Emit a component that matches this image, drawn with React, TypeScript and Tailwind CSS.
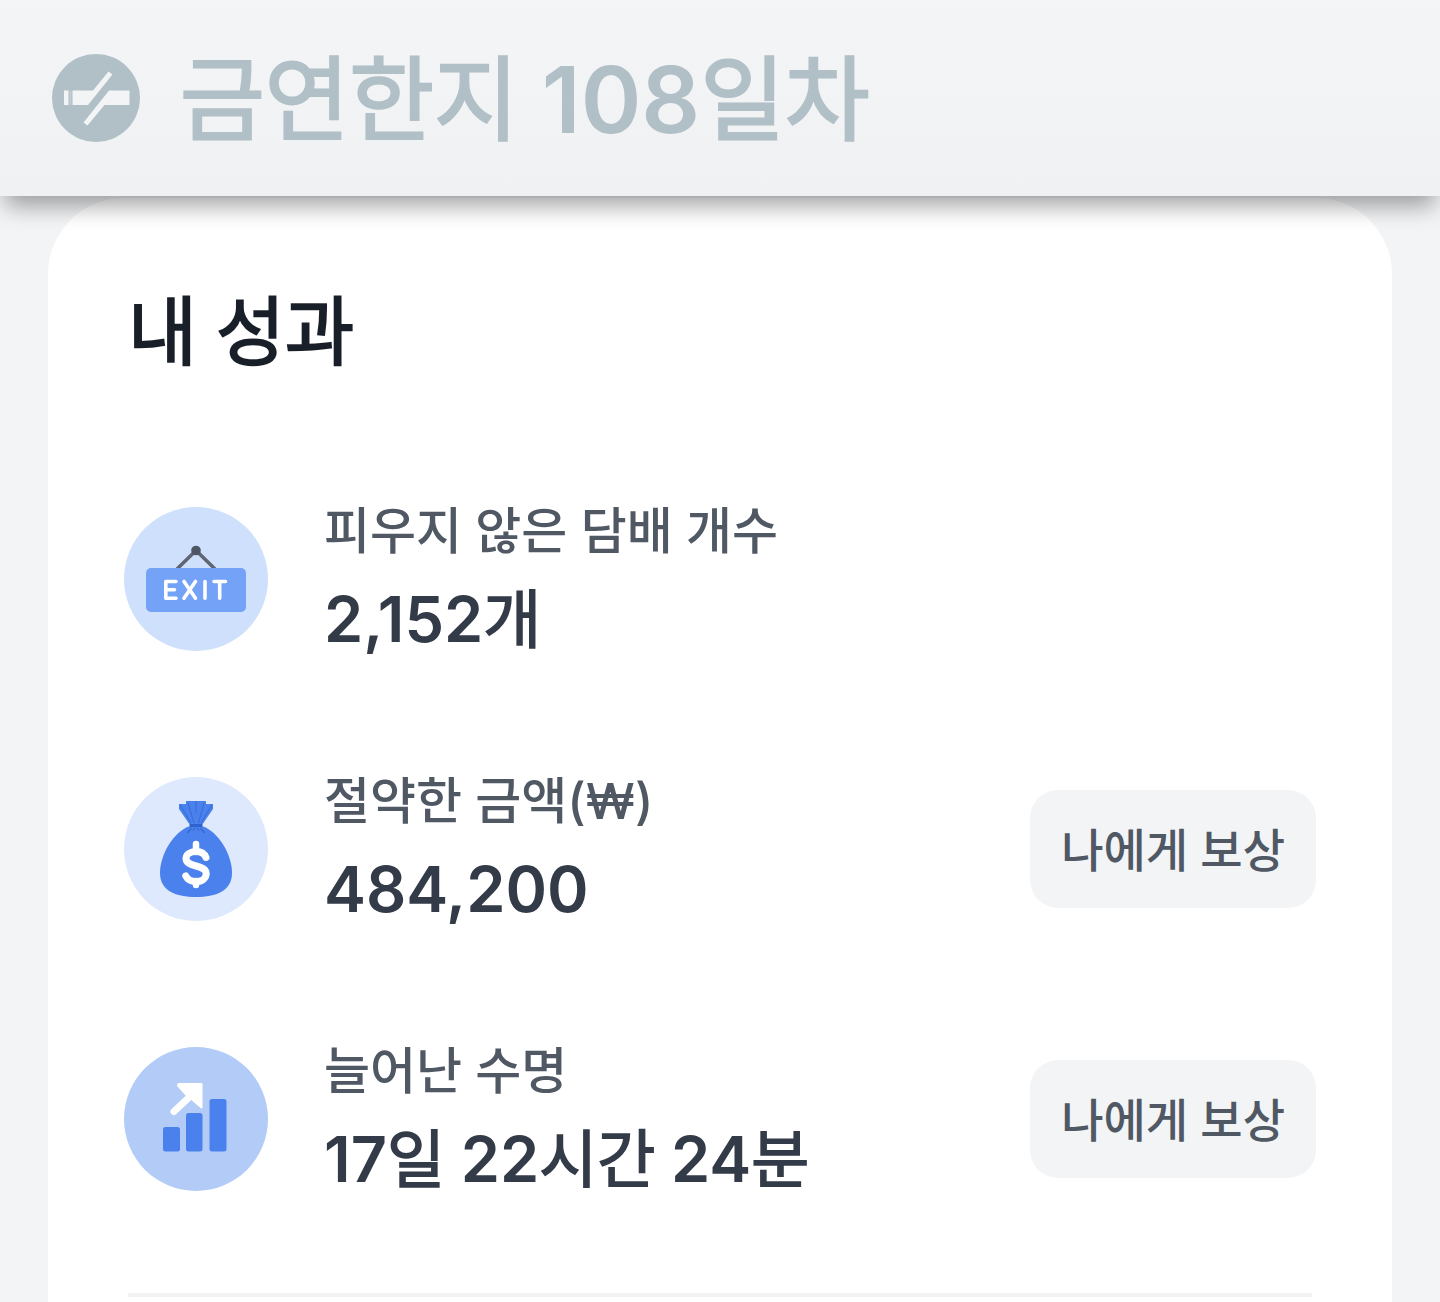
import React from 'react';

interface Achievement {
  id: string;
  label: string;
  value: string;
  icon: React.ReactNode;
  rewardable: boolean;
}

const NoSmokingIcon: React.FC = () => (
  <svg viewBox="0 0 88 88" className="size-[88px] shrink-0" aria-hidden="true">
    <circle cx="44" cy="44" r="44" fill="#b1bfc6" />
    <g fill="#f2f4f6">
      <rect x="12" y="36.5" width="4.5" height="14.5" />
      <rect x="17.8" y="36.5" width="1.4" height="14.5" opacity="0.35" />
      <path d="M20.5 36.5H41L56.5 17.5L60.5 20.5L36 51H20.5Z" />
      <path d="M57 36.5H77.5V51H52.5L35.5 71.5L31.5 68.5Z" />
    </g>
  </svg>
);

const ExitIcon: React.FC = () => (
  <svg viewBox="0 0 144 144" className="size-36 shrink-0" aria-hidden="true">
    <circle cx="72" cy="72" r="72" fill="#cee0fb" />
    <path d="M53 62L72 43.5L91 62" fill="none" stroke="#5f6672" strokeWidth="3.5" />
    <circle cx="72" cy="43.5" r="4.8" fill="#4e5663" />
    <rect x="22" y="61" width="100" height="44" rx="5" fill="#74a2f7" />
    <g fill="none" stroke="#ffffff" strokeWidth="3.6" strokeLinecap="round" strokeLinejoin="round">
      <path d="M52 74.5H41.8V91.2H52M42 82.8H50.5" />
      <path d="M60 74.5L71.5 91.2M71.5 74.5L60 91.2" />
      <path d="M81 74.5V91.2" />
      <path d="M90 74.5H101.5M95.7 74.5V91.2" />
    </g>
  </svg>
);

const MoneyBagIcon: React.FC = () => (
  <svg viewBox="0 0 144 144" className="size-36 shrink-0" aria-hidden="true">
    <circle cx="72" cy="72" r="72" fill="#dee9fd" />
    <path d="M55 27H62V24H82V27H89V32L78 48H66L55 32Z" fill="#4a81ec" />
    <path
      d="M56 28L67 46M64 26L70 46M72 24V36M80 26L74.5 46M88 28L77 46"
      fill="none"
      stroke="#3b6ed8"
      strokeWidth="1.1"
    />
    <path
      d="M66 49H78C95 55 108 78 108 96C108 114 92 120 72 120C52 120 36 114 36 96C36 78 49 55 66 49Z"
      fill="#4a81ec"
    />
    <rect x="65.5" y="47" width="13" height="3" rx="1" fill="#2f62cc" />
    <path d="M68 51L63 56M71 51L69 53.5M73 51L75 53.5M76 51L81 56" stroke="#3567cf" strokeWidth="1.2" />
    <path
      d="M82 80.5C80.5 76.5 76.5 74.5 72 74.5C66 74.5 62 77.5 62 81.5C62 91 82.2 87 82.2 96.5C82.2 101.5 78 104.5 72 104.5C67 104.5 63.5 102.5 61.8 99"
      fill="none"
      stroke="#ffffff"
      strokeWidth="7"
      strokeLinecap="round"
    />
    <path d="M72 67V75M72 104V108" stroke="#ffffff" strokeWidth="6.5" strokeLinecap="round" />
  </svg>
);

const GrowthIcon: React.FC = () => (
  <svg viewBox="0 0 144 144" className="size-36 shrink-0" aria-hidden="true">
    <circle cx="72" cy="72" r="72" fill="#b3cbf7" />
    <g fill="#4a81ec">
      <rect x="39" y="80" width="17" height="24.5" rx="2.5" />
      <rect x="62" y="66" width="16.5" height="38.5" rx="2.5" />
      <rect x="85.5" y="52" width="17" height="52.5" rx="2.5" />
    </g>
    <path d="M50 64.5L67 48.5" stroke="#ffffff" strokeWidth="7" strokeLinecap="round" />
    <path
      d="M54.5 37H77.5V60.5L67 51.5L62 47.5L54 38.5Z"
      fill="#ffffff"
      stroke="#ffffff"
      strokeWidth="2"
      strokeLinejoin="round"
    />
  </svg>
);

const achievements: Achievement[] = [
  {
    id: 'cigarettes',
    label: '피우지 않은 담배 개수',
    value: '2,152개',
    icon: <ExitIcon />,
    rewardable: false,
  },
  {
    id: 'money',
    label: '절약한 금액(₩)',
    value: '484,200',
    icon: <MoneyBagIcon />,
    rewardable: true,
  },
  {
    id: 'life',
    label: '늘어난 수명',
    value: '17일 22시간 24분',
    icon: <GrowthIcon />,
    rewardable: true,
  },
];

const AchievementRow: React.FC<{ item: Achievement }> = ({ item }) => (
  <li className="flex items-center">
    {item.icon}
    <div className="ml-14 flex flex-1 flex-col gap-4">
      <p className="text-[50px] leading-[64px] font-medium text-[#505864]">{item.label}</p>
      <p className="font-['Inter','Noto_Sans_CJK_KR_DemiLight','Noto_Sans_CJK_KR',sans-serif] text-[63px] leading-[80px] font-semibold text-[#333b48]">
        {item.value}
      </p>
    </div>
    {item.rewardable && (
      <button
        type="button"
        className="shrink-0 rounded-[28px] bg-[#f2f4f6] px-[31px] pt-7 pb-[26px] text-[46px] leading-[64px] font-medium text-[#505864]"
      >
        나에게 보상
      </button>
    )}
  </li>
);

const App: React.FC = () => {
  return (
    <div className="flex min-h-screen flex-col bg-[#f2f4f6] font-['Inter','Noto_Sans_CJK_KR',sans-serif]">
      <header className="sticky top-0 z-10 flex items-center gap-10 bg-linear-to-b from-[#f3f5f7] to-[#eff1f3] px-[52px] py-8 shadow-[0_15px_22px_-5px_rgba(0,0,0,0.36)]">
        <NoSmokingIcon />
        <h1 className="pt-1 font-['Inter','Noto_Sans_CJK_KR_DemiLight','Noto_Sans_CJK_KR',sans-serif] text-[92px] leading-[128px] font-semibold text-[#b1bfc6]">
          금연한지 108일차
        </h1>
      </header>
      <main className="flex flex-1 flex-col px-12">
        <section className="mt-0.5 flex-1 rounded-t-[76px] bg-white px-[76px] pt-[86px]">
          <h2 className="px-1 font-['Inter','Noto_Sans_CJK_KR_DemiLight','Noto_Sans_CJK_KR',sans-serif] text-[75px] leading-[96px] font-semibold text-[#191f28]">
            내 성과
          </h2>
          <ul className="mt-[119px] flex flex-col gap-[110px]">
            {achievements.map((item) => (
              <AchievementRow key={item.id} item={item} />
            ))}
          </ul>
          <hr className="mx-1 mt-[94px] border-t-4 border-[#f2f3f4]" />
        </section>
      </main>
    </div>
  );
};

export default App;
